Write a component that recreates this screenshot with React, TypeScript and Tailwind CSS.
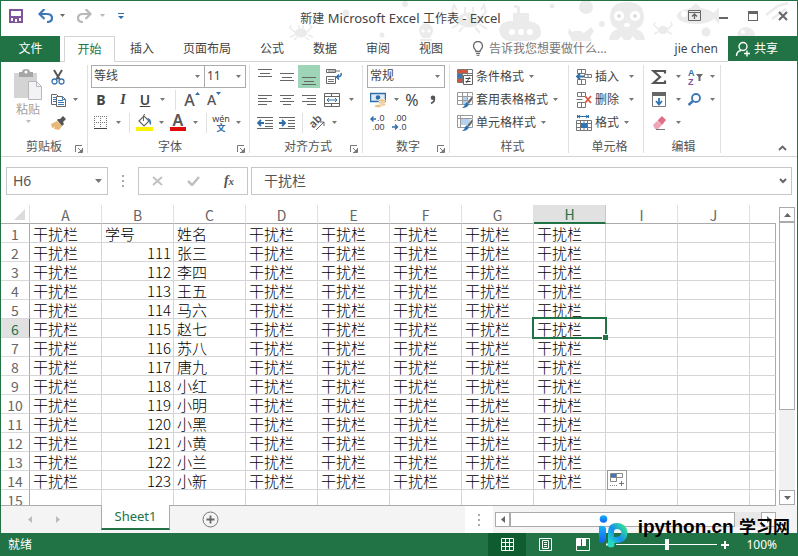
import { useState } from 'react';
import type { ReactNode } from 'react';

const columns = ['A', 'B', 'C', 'D', 'E', 'F', 'G', 'H', 'I', 'J'];

const people = ['张三', '李四', '王五', '马六', '赵七', '苏八', '唐九', '小红', '小明', '小黑', '小黄', '小兰', '小新'];

const filler = '干扰栏';

// Column B holds the student number, column C the name, D to H are filler
const rows: string[][] = [
    [filler, '学号', '姓名', filler, filler, filler, filler, filler],
    ...people.map((name, i) => [filler, String(111 + i), name, filler, filler, filler, filler, filler]),
    [],
];

const menuTabs = ['插入', '页面布局', '公式', '数据', '审阅', '视图'];

interface IconProps {
    children: ReactNode;
    w?: number;
    h?: number;
}

function Icon({ children, w = 16, h = 16 }: IconProps) {
    return (
        <svg width={w} height={h} viewBox={`0 0 ${w} ${h}`} fill="none" aria-hidden="true" className="shrink-0">
            {children}
        </svg>
    );
}

function Triangle({ color = '#777' }: { color?: string }) {
    return (
        <Icon w={5} h={3}>
            <path d="M0 0h5L2.5 3z" fill={color} />
        </Icon>
    );
}

function Tool({ label, className = 'w-5', children }: { label: string; className?: string; children: ReactNode }) {
    return (
        <button aria-label={label} className={`flex h-[23px] items-center justify-center ${className}`}>
            {children}
        </button>
    );
}

function Caret({ label }: { label: string }) {
    return (
        <Tool label={`${label}选项`} className="w-[14px]">
            <Triangle />
        </Tool>
    );
}

function Divider() {
    return <span className="mx-1 h-5 w-px bg-[#e0e0e0]" />;
}

function Combo({ label, value, className }: { label: string; value: string; className: string }) {
    return (
        <div className={`relative flex h-[23px] border border-[#ababab] bg-white ${className}`}>
            <select aria-label={label} className="block h-[21px] w-full appearance-none bg-transparent pb-[2px] pl-[2px] text-xs leading-4 text-[#444] outline-none">
                <option>{value}</option>
            </select>
            <span className="pointer-events-none absolute inset-y-0 right-1 flex items-center">
                <Triangle />
            </span>
        </div>
    );
}

function Group({ title, className, launcher, children }: { title: string; className: string; launcher?: boolean; children: ReactNode }) {
    return (
        <section className={`flex shrink-0 flex-col border-r border-[#e0e0e0] ${className}`}>
            <div className="h-[69px]">{children}</div>
            <div className="flex h-[19px] items-end">
                <h2 className="flex-1 text-center text-xs leading-[13px] text-[#555]">{title}</h2>
                {launcher && (
                    <button aria-label={`${title}设置`} className="mr-1 -ml-3">
                        <Icon w={8} h={8}>
                            <path d="M.5 7V.5H7M3 3l3 3M7.500 3v4.500H3" stroke="#777" />
                            <path d="M4 7h4V3z" fill="#777" />
                        </Icon>
                    </button>
                )}
            </div>
        </section>
    );
}

function Lines({ rows }: { rows: [number, number, number][] }) {
    return (
        <Icon>
            {rows.map(([x, y, w]) => (
                <rect key={y} x={x} y={y} width={w} height="1" fill="#666" />
            ))}
        </Icon>
    );
}

// Light sea creatures behind the title
function Doodles() {
    return (
        <svg width="508" height="40" viewBox="290 0 508 40" className="pointer-events-none absolute top-0 right-0" aria-hidden="true">
            <g fill="#ebebeb" stroke="#ebebeb">
                <ellipse cx="302" cy="32" rx="6" ry="4" />
                <path d="M296 31l-5-4 1-3M308 31l5-5-3-3M296 34l-5 2M309 34l5 2M298 36l-3 3M306 36l4 3M300 28v-4M304 28v-4" fill="none" strokeWidth="1.500" />
                <circle cx="347" cy="12" r="3.500" stroke="none" />
                <circle cx="383" cy="34" r="2.500" stroke="none" />
                <circle cx="406" cy="3" r="3" stroke="none" />
                <path d="M421 33a7 7 0 1 1 12 0l-2 4h-8z" stroke="none" />
                <path d="M421 39h12" strokeWidth="2" />
                <ellipse cx="470" cy="19" rx="11" ry="7" />
                <path d="M459 17l-6-7 2-6 3 5M481 17l6-6-2-7-3 5M460 23l-7 4M480 23l8 5M464 26l-4 5M476 26l5 6M466 12V6M474 12V6" fill="none" strokeWidth="2" />
                <path d="M500 28q2-7 10-8h4v-8h16v8q12 2 12 11 0 9-14 9h-17q-10-1-11-12zM521 12V7q0-3-6-3v3h3v5z" stroke="none" />
                <circle cx="553" cy="5" r="2.500" stroke="none" />
                <circle cx="587" cy="6" r="7" stroke="none" />
                <circle cx="603" cy="23" r="3" stroke="none" />
                <path d="M570 27l3 4q7-3 12 1l7-6 3 4-4 6 2 4h-20l-2-5-2-3z" stroke="none" />
                <path d="M611 16q0-15 17-15t17 15q0 9-8 12 8 2 9 11h-9l-3-4-3 4h-6l-3-4-3 4h-9q1-9 9-11-8-3-8-12z" stroke="none" />
                <ellipse cx="664" cy="29" rx="5" ry="3.500" />
                <path d="M659 28l-4-4 1-3M669 28l4-4-1-3M659 31l-4 2M669 31l4 2" fill="none" strokeWidth="1.500" />
                <ellipse cx="697" cy="15" rx="19" ry="8" stroke="none" />
                <path d="M712 15l8-9v17zM690 8l7-6 6 6z" stroke="none" />
                <circle cx="707" cy="31" r="4.500" stroke="none" />
                <circle cx="747" cy="35" r="9" stroke="none" />
                <path d="M767 14l12-9 10-3M773 18l14-10" fill="none" strokeWidth="2.500" />
            </g>
            <g fill="#fff">
                <circle cx="424" cy="30" r="1.500" />
                <circle cx="430" cy="30" r="1.500" />
                <circle cx="513" cy="31" r="3" />
                <circle cx="522" cy="31" r="3" />
                <circle cx="531" cy="31" r="3" />
                <circle cx="466" cy="17" r="2" />
                <circle cx="474" cy="17" r="2" />
                <circle cx="620" cy="15" r="5" />
                <circle cx="636" cy="15" r="5" />
                <ellipse cx="628" cy="24" rx="3" ry="2" />
                <circle cx="685" cy="13" r="3" />
                <circle cx="744" cy="31" r="2" />
            </g>
            <g fill="#ddd">
                <circle cx="620" cy="15" r="2" />
                <circle cx="636" cy="15" r="2" />
            </g>
        </svg>
    );
}

function TitleBar() {
    return (
        <header className="relative flex h-[35px] shrink-0 items-start pt-[3px]">
            <div className="flex items-center">
                <Tool label="保存" className="w-[30px]">
                    <Icon w={14} h={14}>
                        <path d="M1 1h12v12H1z" stroke="#80539d" strokeWidth="2" />
                        <path d="M2 7h10v2H2zM4 9h6v4H4z" fill="#80539d" />
                        <path d="M3 2h8v5H3zM6 10h2v3H6z" fill="#fff" />
                    </Icon>
                </Tool>
                <Tool label="撤消" className="w-[28px]">
                    <Icon w={15} h={14}>
                        <path d="M2 5h7q5 0 5 4t-5 4" stroke="#3e78b3" strokeWidth="2.200" />
                        <path d="M6.500 0L1.500 5l5 5" stroke="#3e78b3" strokeWidth="2.200" />
                    </Icon>
                </Tool>
                <Tool label="撤消列表" className="w-[6px]">
                    <Triangle color="#666" />
                </Tool>
                <Tool label="恢复" className="w-[38px]">
                    <Icon w={15} h={14}>
                        <path d="M13 5H6Q1 5 1 9t5 4" stroke="#b8b8b8" strokeWidth="2.200" />
                        <path d="M8.500 0l5 5-5 5" stroke="#b8b8b8" strokeWidth="2.200" />
                    </Icon>
                </Tool>
                <Tool label="恢复列表" className="-ml-1 w-[6px]">
                    <Triangle color="#b8b8b8" />
                </Tool>
                <Tool label="自定义快速访问工具栏" className="w-8">
                    <Icon w={6} h={6}>
                        <path d="M0 0h6v1H0zM0 3h6L3 6z" fill="#2f6da8" />
                    </Icon>
                </Tool>
            </div>
            <h1 className="relative z-10 flex-1 pt-[3px] pr-4 text-center text-[13px] leading-[22px] text-[#444]">
                <span className="text-xs">新建</span> Microsoft Excel <span className="text-xs">工作表</span> - Excel
            </h1>
            <div className="relative z-10 flex items-center">
                <Tool label="功能区显示选项" className="w-7">
                    <Icon w={13} h={11}>
                        <path d="M.5.500h12v10H.500zM.500 2.500h12" stroke="#666" />
                        <path d="M6.500 9V4.500M4 6.500l2.500-2.500L9 6.500" stroke="#666" strokeWidth="1.300" />
                    </Icon>
                </Tool>
                <Tool label="最小化" className="w-[30px]">
                    <span className="mt-1 h-[2px] w-[9px] bg-[#666]" />
                </Tool>
                <Tool label="最大化" className="w-[30px]">
                    <span className="h-[10px] w-[10px] border border-t-[3px] border-[#666]" />
                </Tool>
                <Tool label="关闭" className="w-[29px]">
                    <Icon w={10} h={10}>
                        <path d="M1 1l8 8M9 1L1 9" stroke="#666" strokeWidth="2" />
                    </Icon>
                </Tool>
            </div>
        </header>
    );
}

function MenuTabs() {
    return (
        <nav className="relative flex h-[26px] shrink-0 text-xs text-[#444]">
            <button className="h-[26px] w-[59px] bg-[#217346] text-white">文件</button>
            <span className="w-1 border-b border-[#d4d4d4]" />
            <button className="w-[51px] border-x border-t border-[#d4d4d4] bg-white text-[#217346]">开始</button>
            <div className="flex flex-1 items-center gap-[29px] border-b border-[#d4d4d4] pl-[15px] whitespace-nowrap">
                {menuTabs.map((tab) => (
                    <button key={tab}>{tab}</button>
                ))}
                <button className="flex items-center gap-[5px] text-[#777]">
                    <Icon w={12} h={15}>
                        <path d="M4 10.500C4 8.500 1.500 8 1.500 5a4.500 4.500 0 0 1 9 0c0 3-2.500 3.500-2.500 5.500z" stroke="#666" strokeWidth="1.300" />
                        <path d="M4 12.500h4M4.500 14.300h3" stroke="#666" />
                    </Icon>
                    告诉我您想要做什么...
                </button>
                <span className="ml-auto pr-[10px] text-xs">jie chen</span>
            </div>
            <button className="flex h-[25px] w-[69px] items-center gap-[2px] bg-[#217346] pl-[7px] text-white">
                <Icon w={17} h={16}>
                    <circle cx="8" cy="5.500" r="4" stroke="#fff" strokeWidth="1.400" />
                    <path d="M1.500 15c0-3 2-5 4.500-5.500M12 9.500v6M9 12.500h6" stroke="#fff" strokeWidth="1.400" />
                </Icon>
                共享
            </button>
        </nav>
    );
}

function GridGlyph() {
    return <path d="M.5.500h15v12H.500zM.500 4.500h15M.500 8.500h15M5.500.500v12M10.500.500v12" stroke="#999" />;
}

function BrushGlyph() {
    return (
        <>
            <path d="M16 3l-6 7 2 2 4-5z" fill="#666" stroke="#fff" strokeWidth=".5" />
            <path d="M10 10l2 2q-1 4-7 4 3-2 3-4z" fill="#2f74b5" />
        </>
    );
}

function Ribbon() {
    return (
        <div className="flex h-[95px] shrink-0 border-b border-[#d4d4d4] pt-[3px] pb-[3px] text-[#444]">
            <Group title="剪贴板" className="w-[87px]" launcher>
                <div className="flex pl-[11px]">
                    <button className="flex w-8 flex-col items-center gap-[2px] pt-1 text-xs leading-4 text-[#a0a0a0]">
                        <Icon w={28} h={31}>
                            <path d="M0 4h23v25H0z" fill="#d4d4d4" />
                            <path d="M5 3h3q0-3 4-3t4 3h3v5H5z" fill="#a6a6a6" />
                            <circle cx="12" cy="3" r="1.500" fill="#fff" />
                            <path d="M14.500 12.500h8l5 5v13h-13z" fill="#f3f3f5" stroke="#b8b8bc" />
                            <path d="M22.500 12.500v5h5" stroke="#b8b8bc" />
                        </Icon>
                        粘贴
                        <Triangle color="#bbb" />
                    </button>
                    <div className="pl-1">
                        <Tool label="剪切">
                            <Icon>
                                <path d="M4 1l6 10M12 1L6 11" stroke="#555" strokeWidth="2" />
                                <circle cx="4.500" cy="12.500" r="2.500" stroke="#3e78b3" strokeWidth="1.300" />
                                <circle cx="11.500" cy="12.500" r="2.500" stroke="#3e78b3" strokeWidth="1.300" />
                            </Icon>
                        </Tool>
                        <div className="flex">
                            <Tool label="复制">
                                <Icon>
                                    <path d="M1.500 2.500h5l2 2v8h-7z" fill="#fff" stroke="#666" />
                                    <path d="M3 5.500h3M3 7.500h3M3 9.500h3" stroke="#3e78b3" />
                                    <path d="M6.500 4.500h6l3 3v7h-9z" fill="#fff" stroke="#666" />
                                    <path d="M12.500 4.500v3h3M8 8.500h5M8 10.500h6M8 12.500h6" stroke="#3e78b3" />
                                </Icon>
                            </Tool>
                            <Caret label="复制" />
                        </div>
                        <Tool label="格式刷">
                            <Icon>
                                <path d="M1 9l6-3 5 5-3 4-5-1 1-2-3 1z" fill="#e8b878" />
                                <path d="M7 5l5 6 2-2-1-2 3-3-3-3-3 3-2 0z" fill="#555" />
                            </Icon>
                        </Tool>
                    </div>
                </div>
            </Group>

            <Group title="字体" className="w-[162px] pl-[3px]" launcher>
                <div className="flex">
                    <Combo label="字体名称" value="等线" className="w-[114px]" />
                    <Combo label="字号" value="11" className="w-[41px] border-l-0" />
                </div>
                <div className="flex items-center gap-[2px]">
                    <Tool label="加粗"><span className="text-sm font-bold">B</span></Tool>
                    <Tool label="倾斜"><span className="font-['Liberation_Serif',serif] text-sm font-bold italic">I</span></Tool>
                    <div className="flex">
                        <Tool label="下划线"><span className="text-sm font-semibold underline">U</span></Tool>
                        <Caret label="下划线" />
                    </div>
                    <Divider />
                    <Tool label="增大字号">
                        <span className="text-base font-medium text-[#555]">A</span>
                        <span className="mb-3"><Icon w={5} h={3}><path d="M0 3h5L2.500 0z" fill="#2f6da8" /></Icon></span>
                    </Tool>
                    <Tool label="减小字号">
                        <span className="text-sm font-medium text-[#555]">A</span>
                        <span className="mb-3"><Triangle color="#2f6da8" /></span>
                    </Tool>
                </div>
                <div className="flex items-center">
                    <Tool label="边框">
                        <Icon w={14} h={14}>
                            <path d="M.5 0v13M6.500 0v13M12.500 0v13M0 .500h13M0 6.500h13" stroke="#777" strokeDasharray="1 1" />
                            <path d="M0 12.500h13" stroke="#444" />
                        </Icon>
                    </Tool>
                    <Caret label="边框" />
                    <Divider />
                    <Tool label="填充颜色">
                        <Icon w={17} h={17}>
                            <path d="M3 7l5-5 5 5-5 5z" fill="#fff" stroke="#666" strokeWidth="1.200" />
                            <path d="M7.500 7V1.500q0-1 1.500-1" stroke="#666" />
                            <path d="M11 4q5 0 4 7-2-1-2-4z" fill="#3e78b3" />
                            <path d="M0 13h17v4H0z" fill="#fff200" />
                        </Icon>
                    </Tool>
                    <Caret label="填充颜色" />
                    <Tool label="字体颜色">
                        <span className="flex flex-col items-center">
                            <span className="text-base leading-[13px] font-semibold text-[#555]">A</span>
                            <span className="h-1 w-4 bg-[#e00b0b]" />
                        </span>
                    </Tool>
                    <Caret label="字体颜色" />
                    <Divider />
                    <Tool label="拼音">
                        <span className="flex flex-col items-center text-[9px] leading-[9px]">
                            <span>wén</span>
                            <span className="font-bold text-[#2f6da8]">文</span>
                        </span>
                    </Tool>
                    <Caret label="拼音" />
                </div>
            </Group>

            <Group title="对齐方式" className="w-[113px] pl-1" launcher>
                <div className="flex">
                    <Tool label="顶端对齐" className="w-[22px]"><Lines rows={[[1, 0, 14], [3, 4, 10], [1, 7, 14]]} /></Tool>
                    <Tool label="垂直居中" className="w-[22px]"><Lines rows={[[1, 4, 14], [3, 8, 10], [1, 11, 14]]} /></Tool>
                    <Tool label="底端对齐" className="w-[22px] bg-[#9fd5b7]"><Lines rows={[[1, 8, 14], [3, 12, 10], [1, 15, 14]]} /></Tool>
                    <Tool label="自动换行" className="w-7">
                        <Icon>
                            <path d="M.5.500h9v3H.500zM.500 7.500h9v7H.500z" stroke="#666" />
                            <path d="M2 2h12M2 10.500h6M2 12.500h6" stroke="#777" />
                            <path d="M15 4q1 4-4 4M13 5.500L10.500 8l2.500 2.500" stroke="#2f6da8" strokeWidth="1.500" />
                        </Icon>
                    </Tool>
                </div>
                <div className="flex">
                    <Tool label="左对齐" className="w-[22px]"><Lines rows={[[1, 3, 14], [1, 6, 9], [1, 9, 14], [1, 12, 9]]} /></Tool>
                    <Tool label="居中" className="w-[22px]"><Lines rows={[[1, 3, 14], [4, 6, 8], [1, 9, 14], [4, 12, 8]]} /></Tool>
                    <Tool label="右对齐" className="w-[22px]"><Lines rows={[[1, 3, 14], [6, 6, 9], [1, 9, 14], [6, 12, 9]]} /></Tool>
                    <Tool label="合并后居中" className="w-6">
                        <Icon>
                            <path d="M.5 1.500h15v13H.500zM.500 4.500h15M.500 11.500h15M7.500 1.500v3M7.500 11.500v3" stroke="#666" />
                            <path d="M3 8h10M5 6L3 8l2 2M11 6l2 2-2 2" stroke="#2f6da8" />
                        </Icon>
                    </Tool>
                    <Caret label="合并" />
                </div>
                <div className="flex items-center">
                    <Tool label="减少缩进量" className="w-[22px]">
                        <Icon>
                            <path d="M0 2.500h16M8 5.500h8M8 8.500h8M8 11.500h8M0 13.500h16" stroke="#666" />
                            <path d="M7 8H1M4 5L1 8l3 3" stroke="#2f6da8" strokeWidth="1.800" />
                        </Icon>
                    </Tool>
                    <Tool label="增加缩进量" className="w-[22px]">
                        <Icon>
                            <path d="M0 2.500h16M9 5.500h7M9 8.500h7M9 11.500h7M0 13.500h16" stroke="#666" />
                            <path d="M0 8h6M3 5l3 3-3 3" stroke="#2f6da8" strokeWidth="1.800" />
                        </Icon>
                    </Tool>
                    <Divider />
                    <Tool label="方向">
                        <Icon w={20} h={20}>
                            <text x="3" y="12" fontSize="11" fontWeight="600" fill="#555" transform="rotate(-45 9 10)">ab</text>
                            <path d="M9 17l8-8M13 9h4v4" stroke="#666" />
                        </Icon>
                    </Tool>
                    <Caret label="方向" />
                </div>
            </Group>

            <Group title="数字" className="w-[87px] pl-1" launcher>
                <Combo label="数字格式" value="常规" className="w-[78px]" />
                <div className="flex">
                    <Tool label="会计数字格式" className="w-[22px]">
                        <Icon>
                            <path d="M.5 1.500h15v8H.500z" fill="#dce9f5" stroke="#2f6da8" strokeWidth="1.500" />
                            <circle cx="8" cy="5.500" r="2.300" fill="#2f6da8" />
                            <g fill="#e8c080" stroke="#fff" strokeWidth=".6">
                                <ellipse cx="12" cy="12.500" rx="3.500" ry="1.600" />
                                <ellipse cx="12" cy="10.500" rx="3.500" ry="1.600" />
                                <ellipse cx="12" cy="8.500" rx="3.500" ry="1.600" />
                                <ellipse cx="8" cy="14" rx="3.500" ry="1.600" />
                            </g>
                        </Icon>
                    </Tool>
                    <Caret label="会计" />
                    <Tool label="百分比样式" className="w-[18px]"><span className="text-base">%</span></Tool>
                    <Tool label="千位分隔样式" className="w-6">
                        <Icon w={6} h={9}>
                            <path d="M1 8.500Q4.500 7 4.500 4" stroke="#555" strokeWidth="1.500" />
                            <circle cx="3" cy="2.800" r="2.300" fill="#555" />
                        </Icon>
                    </Tool>
                </div>
                <div className="flex font-['Liberation_Sans',sans-serif]">
                    <Tool label="增加小数位数" className="w-[22px]">
                        <Icon w={18} h={20}>
                            <path d="M7 6H2M4.500 3.500L2 6l2.500 2.500" stroke="#2f6da8" strokeWidth="1.400" />
                            <text x="8" y="8" fontSize="9" fill="#444">.0</text>
                            <text x="3" y="17" fontSize="9" fill="#444">.00</text>
                        </Icon>
                    </Tool>
                    <Tool label="减少小数位数" className="w-[22px]">
                        <Icon w={18} h={20}>
                            <text x="3" y="8" fontSize="9" fill="#444">.00</text>
                            <path d="M1 14h5M4 11.500L6.500 14 4 16.500" stroke="#2f6da8" strokeWidth="1.400" />
                            <text x="8" y="17" fontSize="9" fill="#444">.0</text>
                        </Icon>
                    </Tool>
                </div>
            </Group>

            <Group title="样式" className="w-[119px] pl-[7px]">
                <button className="flex h-[23px] items-center gap-[3px] text-xs">
                    <Icon>
                        <path d="M.5.500h15v13H.500zM.500 4.500h15M.500 9.500h6M5.500.500v13M10.500.500v5" stroke="#777" />
                        <path d="M1 1h9v3H1zM1 10h4v3H1z" fill="#d2553c" />
                        <path d="M1 5h4v4H1z" fill="#3e78b3" />
                        <path d="M6.500 6.500h9v9h-9z" fill="#fff" stroke="#666" />
                        <path d="M8.500 9.500h5M8.500 12.500h5M12.500 8l-3 6" stroke="#444" />
                    </Icon>
                    条件格式
                    <span className="pl-[2px]"><Triangle /></span>
                </button>
                <button className="flex h-[23px] items-center gap-[3px] text-xs">
                    <Icon>
                        <path d="M5 4h6v8H5z" fill="#b5d2ee" />
                        <GridGlyph />
                        <BrushGlyph />
                    </Icon>
                    套用表格格式
                    <span className="pl-[2px]"><Triangle /></span>
                </button>
                <button className="flex h-[23px] items-center gap-[3px] text-xs">
                    <Icon>
                        <path d="M.5.500h15v12H.500zM.500 3.500h15M3.500.500v12" stroke="#999" />
                        <path d="M4 4h9v6H4z" fill="#b5d2ee" />
                        <BrushGlyph />
                    </Icon>
                    单元格样式
                    <span className="pl-[2px]"><Triangle /></span>
                </button>
            </Group>

            <Group title="单元格" className="w-[75px] pl-[7px]">
                <button className="flex h-[23px] items-center gap-[3px] text-xs">
                    <Icon>
                        <path d="M1.500.500h8v4h-8zM5.500.500v4M1.500 10.500h8v5h-8zM5.500 10.500v5M8.500 5.500h7v3h-7zM12 5.500v3" stroke="#777" />
                        <path d="M8 7.500H1M4 4.500l-3 3 3 3" stroke="#2f6da8" strokeWidth="1.800" />
                    </Icon>
                    插入
                    <span className="pl-[7px]"><Triangle /></span>
                </button>
                <button className="flex h-[23px] items-center gap-[3px] text-xs">
                    <Icon>
                        <path d="M1.500.500h8v4h-8zM5.500.500v4M1.500 10.500h8v5h-8zM5.500 10.500v5M.500 7.500h6" stroke="#777" />
                        <path d="M9 4l6 7M15 4l-6 7" stroke="#e0563a" strokeWidth="1.800" />
                    </Icon>
                    删除
                    <span className="pl-[7px]"><Triangle /></span>
                </button>
                <button className="flex h-[23px] items-center gap-[3px] text-xs">
                    <Icon>
                        <path d="M1 1.500h12M1.500 0v3M12.500 0v3M4 0L2 1.500 4 3M10 0l2 1.500L10 3" stroke="#2f6da8" />
                        <path d="M.5 5.500h15v10H.500zM.500 8.500h15M.500 12.500h15M4.500 5.500v10M11.500 5.500v10M8 5.500v10" stroke="#777" />
                        <path d="M5 8h6v5H5z" fill="#2f74b5" />
                    </Icon>
                    格式
                    <span className="pl-[2px]"><Triangle /></span>
                </button>
            </Group>

            <Group title="编辑" className="w-[77px] pl-[3px]">
                <div className="flex">
                    <Tool label="自动求和" className="w-6">
                        <Icon>
                            <path d="M14 4.500V2H2.500L9 8l-6.500 6H14v-2.500" stroke="#555" strokeWidth="2.200" />
                        </Icon>
                    </Tool>
                    <Caret label="求和" />
                    <Tool label="排序和筛选">
                        <Icon w={18} h={20}>
                            <text x="2" y="9" fontSize="9" fontWeight="600" fill="#2f6da8" className="font-['Liberation_Sans',sans-serif]">A</text>
                            <text x="2" y="18" fontSize="9" fontWeight="600" fill="#80539d" className="font-['Liberation_Sans',sans-serif]">Z</text>
                            <path d="M10 7h7l-2.500 3v4h-2v-4z" fill="#666" />
                        </Icon>
                    </Tool>
                    <Caret label="排序" />
                </div>
                <div className="flex">
                    <Tool label="填充" className="w-6">
                        <Icon>
                            <path d="M1.500 1.500h13v13h-13z" stroke="#777" />
                            <path d="M1 0h14v4H1z" fill="#666" />
                            <path d="M8 6v6M5 9l3 3.500L11 9" stroke="#2f74b5" strokeWidth="1.800" />
                        </Icon>
                    </Tool>
                    <Caret label="填充" />
                    <Tool label="查找和选择">
                        <Icon>
                            <circle cx="9" cy="6" r="4" stroke="#3e78b3" strokeWidth="1.800" />
                            <path d="M6 9l-4.500 4" stroke="#3e78b3" strokeWidth="2.500" />
                        </Icon>
                    </Tool>
                    <Caret label="查找" />
                </div>
                <div className="flex">
                    <Tool label="清除" className="w-6">
                        <Icon>
                            <path d="M2 10l4-4 5 4-4 4H4z" fill="#f0a5b5" />
                            <path d="M6.500 5.500L11 1l4 4-4 5z" fill="#e0708a" />
                            <path d="M5 14.500h9" stroke="#777" />
                        </Icon>
                    </Tool>
                    <Caret label="清除" />
                </div>
            </Group>

            <div className="flex flex-1 items-end justify-end pr-[10px]">
                <button aria-label="折叠功能区" className="mb-[2px]">
                    <Icon w={9} h={6}>
                        <path d="M1 5l3.500-3.500L8 5" stroke="#666" strokeWidth="1.800" />
                    </Icon>
                </button>
            </div>
        </div>
    );
}

function FormulaBar() {
    return (
        <div className="flex h-12 shrink-0 items-center pr-[5px] pl-[5px] text-[#555]">
            <div className="flex h-7 w-[102px] items-center border border-[#c6c6c6] pr-[5px] pl-[6px]">
                <input aria-label="名称框" defaultValue="H6" className="w-full min-w-0 text-sm outline-none" />
                <Icon w={7} h={4}>
                    <path d="M0 0h7L3.500 4z" fill="#777" />
                </Icon>
            </div>
            <span className="flex w-[30px] flex-col items-center gap-[3px]">
                <span className="h-[2px] w-[2px] bg-[#aaa]" />
                <span className="h-[2px] w-[2px] bg-[#aaa]" />
                <span className="h-[2px] w-[2px] bg-[#aaa]" />
            </span>
            <div className="mr-[3px] flex h-7 w-[110px] items-center border border-[#c6c6c6]">
                <Tool label="取消" className="w-9">
                    <Icon w={11} h={10}>
                        <path d="M1 1l9 8M10 1L1 9" stroke="#c0c0c0" strokeWidth="1.800" />
                    </Icon>
                </Tool>
                <Tool label="输入" className="w-9">
                    <Icon w={13} h={10}>
                        <path d="M1 5l4 4 7-8" stroke="#c0c0c0" strokeWidth="2.500" />
                    </Icon>
                </Tool>
                <Tool label="插入函数" className="w-9">
                    <span className="font-['Liberation_Serif',serif] text-sm font-bold italic">f<span className="text-[11px]">x</span></span>
                </Tool>
            </div>
            <div className="flex h-7 flex-1 items-center border border-[#c6c6c6] pr-1 pl-3">
                <input aria-label="编辑栏" defaultValue={filler} className="w-full min-w-0 text-sm outline-none" />
                <Icon w={8} h={6}>
                    <path d="M1 1l3 3 3-3" stroke="#666" strokeWidth="2" />
                </Icon>
            </div>
        </div>
    );
}

function PasteOptions() {
    return (
        <button aria-label="自动填充选项" className="absolute -top-px left-px flex h-5 w-5 items-center justify-center border border-[#999] bg-white">
            <Icon w={14} h={14}>
                <path d="M.5.500h12v4H.500zM.500 4.500h6v4h-6zM6.500.500v4" stroke="#888" />
                <path d="M1 1h5v3H1z" fill="#3f73c4" />
                <path d="M0 12.500h8" stroke="#888" strokeDasharray="1 1" />
                <path d="M11.500 8v5M9 10.500h5" stroke="#777" />
            </Icon>
        </button>
    );
}

function Sheet() {
    const [active, setActive] = useState({ row: 5, col: 7 });

    return (
        <div className="min-w-0 flex-1 overflow-hidden font-['Noto_Sans_CJK_SC',sans-serif]">
            <table className="w-full table-fixed border-separate border-spacing-0">
                <colgroup>
                    <col className="w-[29px]" />
                    {columns.map((col) => (
                        <col key={col} className="w-[72px]" />
                    ))}
                    <col />
                </colgroup>
                <thead>
                    <tr className="text-sm leading-4 text-[#666]">
                        <td className="h-[19px] border-r border-b border-r-[#e0e0e0] border-b-[#ababab] p-0">
                            <span className="flex justify-end pr-1">
                                <Icon w={11} h={11}>
                                    <path d="M11 0v11H0z" fill="#dcdcdc" />
                                </Icon>
                            </span>
                        </td>
                        {columns.map((col, i) => (
                            <th
                                key={col}
                                scope="col"
                                className={`h-[19px] border-r px-0 pt-[2px] pb-0 font-normal ${i === active.col ? 'border-b-2 border-r-[#c8c8c8] border-b-[#217346] bg-[#e1e1e1] leading-[15px] text-[#217346]' : 'border-b border-r-[#e0e0e0] border-b-[#ababab]'}`}
                            >
                                {col}
                            </th>
                        ))}
                        <td className="border-b border-[#ababab] p-0" />
                    </tr>
                </thead>
                <tbody>
                    {rows.map((row, r) => (
                        <tr key={r} className="text-[15px] leading-4 text-black">
                            <th
                                scope="row"
                                className={`h-[19px] border-r border-b border-b-[#d8d8d8] px-0 pt-[2px] pb-0 text-sm leading-4 font-normal ${r === active.row ? 'border-r-[#217346] bg-[#e1e1e1] text-[#217346]' : 'border-r-[#ababab] text-[#666]'}`}
                            >
                                {r + 1}
                            </th>
                            {columns.map((col, c) => (
                                <td
                                    key={col}
                                    onClick={() => setActive({ row: r, col: c })}
                                    className={`relative h-[19px] border-r border-b border-[#d4d4d4] pt-[2px] pb-0 font-light whitespace-nowrap ${c === 1 && r > 0 ? 'pr-[2px] pl-0 text-right' : 'pr-0 pl-[3px]'}`}
                                >
                                    {row[c]}
                                    {r === active.row && c === active.col && (
                                        <span className="absolute -inset-[2px] z-10 border-2 border-[#217346]">
                                            <span className="absolute -right-[3px] -bottom-[3px] h-[6px] w-[6px] border-t border-l border-white bg-[#217346]" />
                                        </span>
                                    )}
                                    {r === 13 && c === 8 && <PasteOptions />}
                                </td>
                            ))}
                            <td className="border-r border-b border-r-[#ababab] border-b-[#d4d4d4] p-0" />
                        </tr>
                    ))}
                </tbody>
            </table>
        </div>
    );
}

function VerticalScroll() {
    return (
        <div className="flex w-[21px] shrink-0 flex-col pt-[2px] pr-[2px] pl-[3px]">
            <button aria-label="向上滚动" className="flex h-[15px] items-center justify-center border border-[#ababab] bg-white">
                <Icon w={7} h={4}>
                    <path d="M0 4h7L3.500 0z" fill="#666" />
                </Icon>
            </button>
            <div className="flex-1 bg-[#f1f1f1]">
                <div className="h-[70%] border border-[#ababab] bg-white" />
            </div>
            <button aria-label="向下滚动" className="flex h-[15px] items-center justify-center border border-[#ababab] bg-white">
                <Icon w={7} h={4}>
                    <path d="M0 0h7L3.500 4z" fill="#666" />
                </Icon>
            </button>
        </div>
    );
}

function SheetTabs() {
    return (
        <div className="flex h-7 shrink-0 bg-[#f4f4f4] pr-[21px]">
            <div className="flex w-[100px] items-center border-t border-[#ababab] pl-[27px]">
                <button aria-label="上一个工作表" className="w-7">
                    <Icon w={4} h={7}>
                        <path d="M4 0v7L0 3.500z" fill="#bbb" />
                    </Icon>
                </button>
                <button aria-label="下一个工作表">
                    <Icon w={4} h={7}>
                        <path d="M0 0v7l4-3.500z" fill="#bbb" />
                    </Icon>
                </button>
            </div>
            <button className="h-[25px] w-[69px] border-x border-b-2 border-x-[#ababab] border-b-[#217346] bg-white text-[13px] text-[#217346]">Sheet1</button>
            <div className="flex flex-1 items-center border-t border-[#ababab]">
                <button aria-label="新工作表" className="ml-8">
                    <Icon w={17} h={17}>
                        <circle cx="8.500" cy="8.500" r="7.500" stroke="#777" />
                        <path d="M8.500 4.500v8M4.500 8.500h8" stroke="#666" strokeWidth="1.800" />
                    </Icon>
                </button>
                <span className="ml-auto flex h-full w-7 flex-col items-center justify-center gap-[3px] bg-white">
                    <span className="h-[2px] w-[2px] bg-[#aaa]" />
                    <span className="h-[2px] w-[2px] bg-[#aaa]" />
                    <span className="h-[2px] w-[2px] bg-[#aaa]" />
                </span>
                <div className="ml-[2px] flex h-[15px] w-[281px] bg-[#e8e8e8]">
                    <button aria-label="向左滚动" className="flex w-[15px] items-center justify-center border border-[#ababab] bg-white">
                        <Icon w={4} h={7}>
                            <path d="M4 0v7L0 3.500z" fill="#666" />
                        </Icon>
                    </button>
                    <div className="w-[225px] border border-[#ababab] bg-white" />
                    <button aria-label="向右滚动" className="ml-auto flex w-[15px] items-center justify-center border border-[#ababab] bg-white">
                        <Icon w={4} h={7}>
                            <path d="M0 0v7l4-3.500z" fill="#666" />
                        </Icon>
                    </button>
                </div>
            </div>
        </div>
    );
}

function StatusBar() {
    return (
        <footer className="flex h-[23px] shrink-0 items-center bg-[#217346] pr-5 pl-[7px] text-xs text-white">
            <span>就绪</span>
            <div className="ml-auto flex h-full items-center">
                <button aria-label="普通" className="flex h-full w-[38px] items-center justify-center bg-[#0e5c2f]">
                    <Icon w={13} h={13}>
                        <path d="M.5.500h12v12H.500zM.500 4.500h12M.500 8.500h12M4.500.500v12M8.500.500v12" stroke="#fff" />
                    </Icon>
                </button>
                <button aria-label="页面布局视图" className="flex w-[38px] items-center justify-center">
                    <Icon w={13} h={13}>
                        <path d="M.5.500h12v12H.500zM3.500 2.500h6v8h-6zM5 4.500h3M5 6.500h3M5 8.500h3" stroke="#fff" />
                    </Icon>
                </button>
                <button aria-label="分页预览" className="flex w-[38px] items-center justify-center">
                    <Icon w={14} h={13}>
                        <path d="M.5.500h13v12H.500z" stroke="#fff" />
                        <path d="M1 1h4v7H1zM6 1h4v7H6z" fill="#fff" />
                    </Icon>
                </button>
                <button aria-label="缩小" className="ml-1 w-[10px]">
                    <Icon w={7} h={7}>
                        <path d="M0 3.500h7" stroke="#fff" strokeWidth="2" />
                    </Icon>
                </button>
                <input
                    type="range"
                    aria-label="缩放"
                    defaultValue={50}
                    className="h-px w-[101px] appearance-none bg-white [&::-webkit-slider-thumb]:h-[11px] [&::-webkit-slider-thumb]:w-1 [&::-webkit-slider-thumb]:appearance-none [&::-webkit-slider-thumb]:bg-white"
                />
                <button aria-label="放大" className="ml-1">
                    <Icon w={8} h={8}>
                        <path d="M0 4h8M4 0v8" stroke="#fff" strokeWidth="2" />
                    </Icon>
                </button>
                <span className="w-12 text-right">100%</span>
            </div>
        </footer>
    );
}

function Watermark() {
    return (
        <div className="pointer-events-none absolute right-[7px] bottom-2 z-20 flex items-start gap-[9px] font-['Liberation_Sans','Noto_Sans_CJK_SC',sans-serif] text-[19px] font-bold text-black">
            <Icon w={30} h={33}>
                <defs>
                    <linearGradient id="stem" x1="0" y1="0" x2="0" y2="1">
                        <stop offset="0" stopColor="#19b4f5" />
                        <stop offset="1" stopColor="#1060f0" />
                    </linearGradient>
                    <linearGradient id="bowl" x1="0" y1="1" x2="1" y2="0">
                        <stop offset="0" stopColor="#25e0c0" />
                        <stop offset=".5" stopColor="#1590f0" />
                        <stop offset="1" stopColor="#30e090" />
                    </linearGradient>
                </defs>
                <circle cx="4.500" cy="4" r="3.800" fill="url(#stem)" />
                <path d="M0 11q5-1 7 2v11q-2 4-4 4-3 0-3-3z" fill="url(#stem)" />
                <path d="M12 29V17q0-6 6-6t7.500 6q0 8-9.500 8-3 0-5-1" stroke="url(#bowl)" strokeWidth="6" />
                <circle cx="12" cy="29" r="3.500" fill="#25d8c0" />
            </Icon>
            <span className="leading-6">
                ipython.cn <span className="text-[17px]">学习网</span>
            </span>
        </div>
    );
}

export default function App() {
    return (
        <div className="relative flex h-screen flex-col overflow-hidden border-x border-t border-[#217346] bg-white font-['Noto_Sans','Noto_Sans_CJK_SC',sans-serif]">
            <Doodles />
            <TitleBar />
            <MenuTabs />
            <Ribbon />
            <FormulaBar />
            <main className="flex min-h-0 flex-1">
                <Sheet />
                <VerticalScroll />
            </main>
            <SheetTabs />
            <StatusBar />
            <Watermark />
        </div>
    );
}
